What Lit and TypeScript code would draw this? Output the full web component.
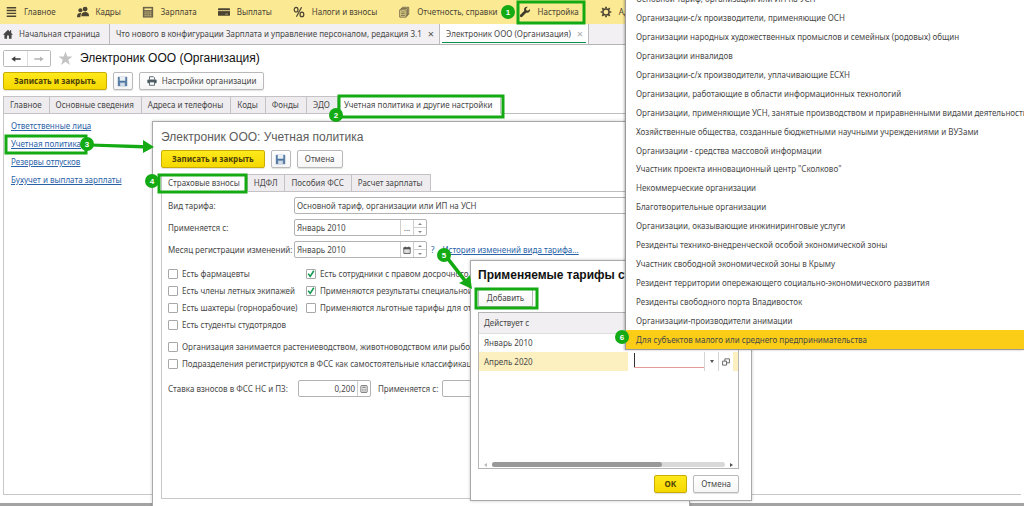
import { LitElement, html, css, svg, nothing, TemplateResult } from "lit";
import { customElement } from "lit/decorators.js";
import { classMap } from "lit/directives/class-map.js";

const icon = (name: string, body: TemplateResult, box = "0 0 14 14") =>
  html`<svg class="icon ${name}" viewBox=${box} aria-hidden="true">${body}</svg>`;

const icons = {
  menu: icon("md", svg`<path d="M2 2h11M2 5.300h11M2 8.600h11M2 11.900h11" stroke="#4b4433" stroke-width="1.700"/>`),
  people: icon("md", svg`<g fill="#4b4433"><circle cx="9.500" cy="3.600" r="2.800"/><path d="M5 12c0-3.500 1.500-5 4.500-5s4.500 1.500 4.500 4.500v.5z"/><circle cx="4" cy="5" r="2.400"/><path d="M0 13c0-3 1-4.800 3.800-4.800.8 0 1.200.2 1.200.5-.8 1-1 2.500-1 4.300z"/></g>`),
  calc: icon("md", svg`<path d="M1 1h12v12.500h-12z" fill="#6b624a"/><path d="M2.800 2.800h8.400v2h-8.400z" fill="#fbe993"/><path d="M3 7h8M3 9.200h8M3 11.400h8" stroke="#fbe993" stroke-width="1.100" stroke-dasharray="1.300 .9"/>`),
  card: icon("md", svg`<rect x="0" y="2.500" width="14" height="9" rx=".8" fill="#4b4433"/><path d="M0 5.400h14" stroke="#fbe993" stroke-width="1"/><path d="M8.500 9.500h3" stroke="#b9ab70" stroke-width="1"/>`),
  percent: icon("md", svg`<g fill="none" stroke="#4b4433" stroke-width="1.400"><ellipse cx="3.600" cy="4.300" rx="2.200" ry="2.700"/><ellipse cx="10.400" cy="9.800" rx="2.200" ry="2.700"/><path d="M10 1.500l-6 11"/></g>`),
  docs: icon("md", svg`<g stroke="#6b6147" fill="#e8d88a" stroke-width="1"><path d="M5 1.500h7.500v8.500H5z"/><path d="M3.500 3H11v8.500H3.500z"/><path d="M2 4.500h7.500V13H2z"/><path d="M3.500 7h4.500M3.500 9h4.500M3.500 11h4.500"/></g>`),
  wrench: icon("md", svg`<path d="M12.800 3.600l-2.300 2-1.900-.5-.5-1.800L10.300 1c-2-.7-4.300.6-4.400 3 0 .6.100 1 .3 1.500L1.500 10.300c-1.400 1.700.7 3.700 2.300 2.300l4.600-4.800c2.800.9 5.200-1.500 4.400-4.200z" fill="#3f3a2c"/>`),
  gear: icon("md", svg`<circle cx="7" cy="7" r="3.600" fill="none" stroke="#4b4433" stroke-width="1.800"/><path d="M7 .8v2M7 11.200v2M.8 7h2M11.200 7h2M2.600 2.600L4 4M10 10l1.400 1.400M11.400 2.600L10 4M4 10l-1.400 1.400" stroke="#4b4433" stroke-width="2"/>`),
  home: icon("sm", svg`<path d="M7 1L0 8H2v5.500h3.700V9h2.600v4.500h3.700V8h2L11.500 5.500V1.800H9.800v2z" fill="#444"/>`),
  left: icon("sm", svg`<path d="M.5 7l5.500-4v2.800h7.500v2.400H6v2.800z" fill="#3c3c3c"/>`),
  right: icon("sm", svg`<path d="M13.500 7L8.500 3.500v2.600H.5v1.800h8v2.600z" fill="#b4b4b4"/>`),
  star: icon("lg", svg`<path d="M8 .5l1.900 5.300h5.600L11 9.200l1.700 5.600L8 11.500l-4.700 3.300L5 9.200.5 5.800h5.600z" fill="#c3c3c3"/>`, "0 0 16 16"),
  floppy: icon("disk", svg`<path d="M1 1h12v12H1z" fill="#5d7fa6"/><path d="M3.500 1h7v5h-7z" fill="#e9f0f6"/><path d="M4 8.500h6V13H4z" fill="#cfdce8"/><path d="M3 7h8" stroke="#48719b" stroke-width="1"/>`),
  printer: icon("sm", svg`<path d="M3.500 5V1h5.500l1.500 1.500V5" fill="#fff" stroke="#4c5a63" stroke-width="1.200"/><rect x=".5" y="4.800" width="13" height="5.500" rx="1.500" fill="#4c5a63"/><path d="M3.500 8.300h7V13h-7z" fill="#fff" stroke="#4c5a63" stroke-width="1.200"/>`),
  calendar: icon("xs", svg`<path d="M1.500 3h11v10h-11z" fill="#fff" stroke="#555" stroke-width="1.600"/><path d="M1 2.500h12V6H1z" fill="#555"/><path d="M4 1v3M10 1v3" stroke="#555" stroke-width="1.600"/><path d="M4 8.500h6M4 10.800h6" stroke="#888" stroke-width="1.200" stroke-dasharray="1.500 .8"/>`),
  keypad: icon("xs", svg`<rect x="1.500" y="1" width="11" height="12" rx="1" fill="#f2f2f2" stroke="#666" stroke-width="1.500"/><path d="M4 4h6" stroke="#666" stroke-width="1.600"/><path d="M4 7.500h6M4 10.300h6" stroke="#666" stroke-width="1.500" stroke-dasharray="1.500 .8"/>`),
  open: icon("xs", svg`<g fill="#fff" stroke="#555" stroke-width="1.500"><path d="M5 1.500h8v7H5z"/><path d="M1 5.500h7v7H1z"/></g>`),
};

const sections: [TemplateResult, string][] = [
  [icons.menu, "Главное"],
  [icons.people, "Кадры"],
  [icons.calc, "Зарплата"],
  [icons.card, "Выплаты"],
  [icons.percent, "Налоги и взносы"],
  [icons.docs, "Отчетность, справки"],
  [icons.wrench, "Настройка"],
  [icons.gear, "Администрирование"],
];

const orgTabs = ["Главное", "Основные сведения", "Адреса и телефоны", "Коды", "Фонды", "ЭДО", "Учетная политика и другие настройки"];
const sideLinks = ["Ответственные лица", "Учетная политика", "Резервы отпусков", "Бухучет и выплата зарплаты"];
const policyTabs = ["Страховые взносы", "НДФЛ", "Пособия ФСС", "Расчет зарплаты"];

const leftChecks = ["Есть фармацевты", "Есть члены летных экипажей", "Есть шахтеры (горнорабочие)", "Есть студенты студотрядов"];
const rightChecks: [string, boolean][] = [
  ["Есть сотрудники с правом досрочного выхода на пенсию", true],
  ["Применяются результаты специальной оценки условий труда", true],
  ["Применяются льготные тарифы для отдельных категорий", false],
];
const wideChecks = [
  "Организация занимается растениеводством, животноводством или рыбоводством",
  "Подразделения регистрируются в ФСС как самостоятельные классификационные единицы",
];

const tariffs = [
  "Основной тариф, организации или ИП на УСН",
  "Организации-с/х производители, применяющие ОСН",
  "Организации народных художественных промыслов и семейных (родовых) общин",
  "Организации инвалидов",
  "Организации-с/х производители, уплачивающие ЕСХН",
  "Организации, работающие в области информационных технологий",
  "Организации, применяющие УСН, занятые производством и приравненными видами деятельности",
  "Хозяйственные общества, созданные бюджетными научными учреждениями и ВУЗами",
  "Организации - средства массовой информации",
  "Участник проекта инновационный центр \"Сколково\"",
  "Некоммерческие организации",
  "Благотворительные организации",
  "Организации, оказывающие инжиниринговые услуги",
  "Резиденты технико-внедренческой особой экономической зоны",
  "Участник свободной экономической зоны в Крыму",
  "Резидент территории опережающего социально-экономического развития",
  "Резиденты свободного порта Владивосток",
  "Организации-производители анимации",
  "Для субъектов малого или среднего предпринимательства",
];

const shared = css`
  :host { display: block; box-sizing: border-box; }
  * { box-sizing: border-box; }
  button, input { font: inherit; color: inherit; margin: 0; }
  h1, h2 { font-family: "Liberation Sans", Arial, sans-serif; }
  .icon { display: block; flex: none; width: 12px; height: 12px; }
  .icon.xs { width: 8px; height: 8px; }
  .icon.sm { width: 10px; height: 10px; }
  .icon.disk { width: 11px; height: 11px; }
  .icon.lg { width: 15px; height: 15px; }
  .btn {
    display: inline-flex; align-items: center; justify-content: center; gap: 5px;
    height: 18px; padding: 0 7px; white-space: nowrap;
    border: 1px solid #b9b9b9; border-radius: 2px;
    background: linear-gradient(#fff, #f6f6f6); box-shadow: 0 1px 1px #0000001f;
  }
  .btn.square { width: 20px; padding: 0; }
  .btn.primary {
    padding: 0 10px; font-weight: bold; color: #4d4208; border-color: #c9ae00;
    background: linear-gradient(#ffe91c, #f5d800);
  }
  .tabs { display: flex; height: 18px; border-bottom: 1px solid #bdbdbd; }
  .tab {
    height: 18px; padding: 0 7px 0 6px; white-space: nowrap; border: 1px solid #c4c2c5;
    border-left-width: 0; background: #eeecef;
  }
  .tab:first-child { border-left-width: 1px; }
  .tab.active { background: #fff; border-bottom-color: #fff; }
`;

const tabStrip = (names: string[], active: number) => html`
  <div class="tabs" role="tablist">
    ${names.map((n, i) => html`<button role="tab" class=${classMap({ tab: true, active: i === active })}>${n}</button>`)}
  </div>`;

@customElement("policy-window")
export class PolicyWindow extends LitElement {
  static styles = [shared, css`
    :host {
      padding: 6px 8px 11px; background: #fff; border: 1px solid #a9a9a9;
      box-shadow: 0 0 3px #00000038; overflow: hidden;
      display: flex; flex-direction: column;
    }
    h2 { margin: 0 0 4px; font-size: 12px; line-height: 18px; font-weight: normal; color: #5c5c5c; }
    .bar { display: flex; gap: 6px; margin-bottom: 6px; }
    .panel { flex: 1; padding: 5px 6px; border: 1px solid #c8c8c8; border-top: 0; }
    .fields { display: grid; grid-template-columns: 126px 1fr; row-gap: 5px; align-items: center; white-space: nowrap; }
    .line { display: flex; align-items: center; height: 17px; }
    .box { display: flex; height: 17px; border: 1px solid #b3b3b3; border-radius: 2px; background: #fff; }
    .box.month { width: 133px; }
    .box.full { flex: 1; }
    .box input { flex: 1; min-width: 0; width: 0; border: 0; padding: 0 2px; background: none; outline: 0; }
    .box button {
      width: 13px; padding: 0; border: 0; border-left: 1px solid #cfcfcf; background: none;
      display: flex; align-items: center; justify-content: center; font-size: 8px; line-height: 8px;
    }
    .spin { display: flex; flex-direction: column; width: 13px; border-left: 1px solid #cfcfcf; }
    .spin button { flex: 1; width: 100%; border: 0; height: 7px; }
    .spin button + button { border-top: 1px solid #cfcfcf; }
    .spin i { border: 2px solid transparent; border-top: 0; border-bottom: 2px solid #888; }
    .spin button + button i { border-top: 2px solid #888; border-bottom: 0; }
    a { color: #2a63a8; }
    .help { margin-left: 4px; padding: 0; border: 0; background: none; color: #2a63a8; }
    .history { margin-left: 8px; white-space: nowrap; }
    .checks { display: grid; grid-template-columns: 138px 1fr; margin-top: 7px; }
    .wide { margin-top: 5px; }
    .check { display: flex; align-items: center; gap: 4px; height: 17px; white-space: nowrap; }
    .check input {
      appearance: none; flex: none; width: 10px; height: 10px;
      border: 1px solid #a8a8a8; border-radius: 1px; background: #fff;
    }
    .check input:checked {
      background: #fff url("data:image/svg+xml,%3Csvg xmlns='http://www.w3.org/2000/svg' viewBox='0 0 10 10'%3E%3Cpath d='M1.500 4.500l2.500 3.500 4.500-7' fill='none' stroke='%23149a52' stroke-width='2'/%3E%3C/svg%3E") center / 100%;
    }
    .rate { display: flex; align-items: center; height: 17px; margin-top: 8px; white-space: nowrap; }
    .rate label:first-child { width: 130px; }
    .rate .box { width: 73px; margin-right: 7px; }
    .rate label + .box:last-child { margin: 0 0 0 4px; }
    .rate .box input { text-align: right; }
  `];

  month(id: string, button: TemplateResult | string) {
    return html`<span class="box month">
      <input id=${id} value="Январь 2010" />
      <button aria-label="Выбрать">${button}</button>
      <span class="spin"><button aria-label="Больше"><i></i></button><button aria-label="Меньше"><i></i></button></span>
    </span>`;
  }

  check(text: string, on = false) {
    return html`<label class="check"><input type="checkbox" ?checked=${on} />${text}</label>`;
  }

  render() {
    return html`
      <h2>Электроник ООО: Учетная политика</h2>
      <div class="bar">
        <button class="btn primary">Записать и закрыть</button>
        <button class="btn square" aria-label="Записать">${icons.floppy}</button>
        <button class="btn">Отмена</button>
      </div>
      ${tabStrip(policyTabs, 0)}
      <div class="panel">
        <div class="fields">
          <label for="kind">Вид тарифа:</label>
          <div class="line"><span class="box full"><input id="kind" value="Основной тариф, организации или ИП на УСН" /></span></div>
          <label for="from">Применяется с:</label>
          <div class="line">${this.month("from", "...")}</div>
          <label for="reg">Месяц регистрации изменений:</label>
          <div class="line">
            ${this.month("reg", icons.calendar)}
            <button class="help">?</button>
            <a class="history" href="#">История изменений вида тарифа...</a>
          </div>
        </div>
        <div class="checks">
          <div>${leftChecks.map((t) => this.check(t))}</div>
          <div>${rightChecks.map(([t, on]) => this.check(t, on))}</div>
        </div>
        <div class="wide">${wideChecks.map((t) => this.check(t))}</div>
        <div class="rate">
          <label for="rate">Ставка взносов в ФСС НС и ПЗ:</label>
          <span class="box"><input id="rate" value="0,200" /><button aria-label="Калькулятор">${icons.keypad}</button></span>
          <label for="rate-from">Применяется с:</label>
          <span class="box"><input id="rate-from" /></span>
        </div>
      </div>`;
  }
}

@customElement("tariff-window")
export class TariffWindow extends LitElement {
  static styles = [shared, css`
    :host {
      display: flex; flex-direction: column; padding: 5px 12px 7px 7px; background: #fff;
      border: 1px solid #a9a9a9; box-shadow: 0 0 3px #00000038;
    }
    h2 { margin: 0 0 5px; font-size: 12px; line-height: 18px; font-weight: bold; color: #111; white-space: nowrap; overflow: hidden; }
    .add { align-self: flex-start; width: 55px; }
    .grid { flex: 1; display: flex; flex-direction: column; margin: 5px 0 6px; border: 1px solid #b5b5b5; }
    table { width: 100%; table-layout: fixed; border-collapse: collapse; text-align: left; }
    th { height: 20px; padding: 0 5px; font-weight: normal; background: #f1eff1; border-bottom: 1px solid #dedede; }
    td { height: 19px; padding: 0 5px; }
    .date { width: 149px; }
    .current td { background: #fdf0c0; }
    .current .edit { padding: 0; }
    .cell { display: flex; width: 105px; height: 19px; padding-left: 6px; background: #fff; }
    .cell input {
      width: 70px; height: 14px; margin-top: 1px; padding: 0 1px; border: 0;
      border-left: 1px solid #333; background: #fff; outline: 0; box-shadow: 0 1px #e59a9a;
    }
    .cell button {
      width: 14px; padding: 0; border: 0; border-left: 1px solid #d5d5d5; background: #fff;
      display: flex; align-items: center; justify-content: center;
    }
    .cell i { border: 2px solid transparent; border-top: 3px solid #555; border-bottom: 0; }
    .scroll { display: flex; align-items: center; gap: 5px; margin: auto 5px 1px; }
    .scroll i { border: 2px solid transparent; border-left: 0; border-right: 3px solid #bbb; }
    .scroll i.next { border-right: 0; border-left: 3px solid #555; }
    .track { flex: 1; height: 5px; border-radius: 3px; background: #d9d9d9; }
    .thumb { width: 73%; height: 5px; border-radius: 3px; background: #999; }
    .foot { display: flex; justify-content: flex-end; gap: 6px; }
  `];

  render() {
    return html`
      <h2>Применяемые тарифы страховых взносов</h2>
      <button class="btn add">Добавить</button>
      <div class="grid">
        <table>
          <thead><tr><th class="date">Действует с</th><th>Вид тарифа</th></tr></thead>
          <tbody>
            <tr><td>Январь 2010</td><td></td></tr>
            <tr class="current">
              <td>Апрель 2020</td>
              <td class="edit"><div class="cell">
                <input aria-label="Вид тарифа" />
                <button aria-label="Список"><i></i></button>
                <button aria-label="Открыть">${icons.open}</button>
              </div></td>
            </tr>
          </tbody>
        </table>
        <div class="scroll"><i></i><div class="track"><div class="thumb"></div></div><i class="next"></i></div>
      </div>
      <div class="foot">
        <button class="btn primary">ОК</button>
        <button class="btn">Отмена</button>
      </div>`;
  }
}

@customElement("step-marks")
export class StepMarks extends LitElement {
  static styles = css`
    :host { display: block; pointer-events: none; }
    svg { display: block; overflow: visible; }
    text { font: bold 8px "Liberation Sans", Arial, sans-serif; fill: #fff; text-anchor: middle; }
    rect { fill: none; stroke: #14aa14; stroke-width: 3; }
    circle, path { fill: #14aa14; }
  `;

  render() {
    const frames = [
      [518, 2, 66, 21], [339, 96, 164, 21], [6, 136, 80, 17], [159, 175, 87, 17], [476, 289, 61, 19],
    ];
    const steps = [[508, 12], [336, 115], [87, 144], [152, 181], [444, 255], [622, 337]];
    return html`<svg width="1024" height="506" viewBox="0 0 1024 506">
      ${frames.map(([x, y, w, h]) => svg`<rect x=${x} y=${y} width=${w} height=${h} />`)}
      <path d="M90 143.500L143 145V140L154 147L143 153V148.500L90 146.500Z" />
      <path d="M445 258L448 256L466 279L470 275L472 289L459 283L463 281Z" />
      ${steps.map(([x, y], i) => svg`<circle cx=${x} cy=${y} r="7" /><text x=${x} y=${y + 3}>${i + 1}</text>`)}
    </svg>`;
  }
}

@customElement("app-root")
export class AppRoot extends LitElement {
  static styles = [shared, css`
    :host {
      position: relative; height: 100vh; overflow: hidden; background: #fff; color: #484848;
      font: 8px/12px "Noto Sans", "Liberation Sans", Arial, sans-serif;
    }
    .main { display: flex; flex-direction: column; height: 100%; border-bottom: 3px solid #a3a3a3; }
    .sections { display: flex; align-items: center; gap: 21px; height: 24px; padding-left: 5px; background: #fbe993; overflow: hidden; }
    .section { display: flex; align-items: center; gap: 7px; padding: 0; border: 0; background: none; white-space: nowrap; color: #4b4433; }
    .pages { display: flex; height: 21px; background: #f2f0f3; border-bottom: 1px solid #b5b5b5; }
    .page {
      display: flex; align-items: center; gap: 6px; padding: 0 5px 0 6px; border: 0; border-right: 1px solid #bcbcbc;
      background: none; white-space: nowrap;
    }
    .page:first-child { padding: 0 9px 0 3px; }
    .page.current { background: linear-gradient(#0a8f4a, #0a8f4a) center bottom 1px / calc(100% - 4px) 1px no-repeat #fff; }
    .close { font-size: 11px; color: #555; }
    .current .close { color: #aaa; }
    .work { flex: 1; display: flex; flex-direction: column; padding: 5px 3px 8px; }
    .title { display: flex; align-items: center; gap: 7px; margin-bottom: 5px; }
    h1 { margin: 0; font-size: 12px; line-height: 17px; font-weight: normal; color: #111; }
    .nav { display: flex; border: 1px solid #b9b9b9; border-radius: 2px; }
    .nav button { display: flex; align-items: center; justify-content: center; width: 23px; height: 15px; padding: 0; border: 0; background: #fff; }
    .nav button + button { border-left: 1px solid #ddd; }
    .bar { display: flex; gap: 6px; margin-bottom: 6px; }
    .panel { flex: 1; border: 1px solid #c8c8c8; border-top: 0; border-right: 0; padding: 6px 7px; }
    .links { display: flex; flex-direction: column; align-items: flex-start; gap: 6px; }
    a { color: #2a63a8; }
    .policy { position: absolute; left: 152px; top: 121px; width: 538px; height: 390px; }
    .tariff { position: absolute; left: 470px; top: 260px; width: 282px; height: 241px; }
    .list {
      position: absolute; left: 625px; right: 0; top: -10px; height: 360px; margin: 0; padding: 0;
      display: grid; grid-auto-rows: 1fr; list-style: none; background: #fff;
      border: solid #9a9a9a; border-width: 0 0 1px 1px; box-shadow: -1px 0 2px #0004;
    }
    .list li { display: flex; align-items: center; padding-left: 10px; white-space: nowrap; overflow: hidden; }
    .list li.picked { background: #fbcd16; }
    .marks { position: absolute; left: 0; top: 0; }
  `];

  render() {
    return html`
      <div class="main">
        <nav class="sections">
          ${sections.map(([i, t]) => html`<button class="section">${i}${t}</button>`)}
        </nav>
        <div class="pages">
          <button class="page">${icons.home}Начальная страница</button>
          <button class="page">Что нового в конфигурации Зарплата и управление персоналом, редакция 3.1 <span class="close">×</span></button>
          <button class="page current">Электроник ООО (Организация) <span class="close">×</span></button>
        </div>
        <div class="work">
          <div class="title">
            <div class="nav"><button aria-label="Назад">${icons.left}</button><button aria-label="Вперед">${icons.right}</button></div>
            ${icons.star}
            <h1>Электроник ООО (Организация)</h1>
          </div>
          <div class="bar">
            <button class="btn primary">Записать и закрыть</button>
            <button class="btn square" aria-label="Записать">${icons.floppy}</button>
            <button class="btn">${icons.printer}Настройки организации</button>
          </div>
          ${tabStrip(orgTabs, 6)}
          <div class="panel"><div class="links">${sideLinks.map((t) => html`<a href="#">${t}</a>`)}</div></div>
        </div>
      </div>
      <policy-window class="policy"></policy-window>
      <tariff-window class="tariff"></tariff-window>
      <ul class="list" role="listbox">
        ${tariffs.map((t, i) => html`<li role="option" class=${i === tariffs.length - 1 ? "picked" : nothing}>${t}</li>`)}
      </ul>
      <step-marks class="marks"></step-marks>`;
  }
}
